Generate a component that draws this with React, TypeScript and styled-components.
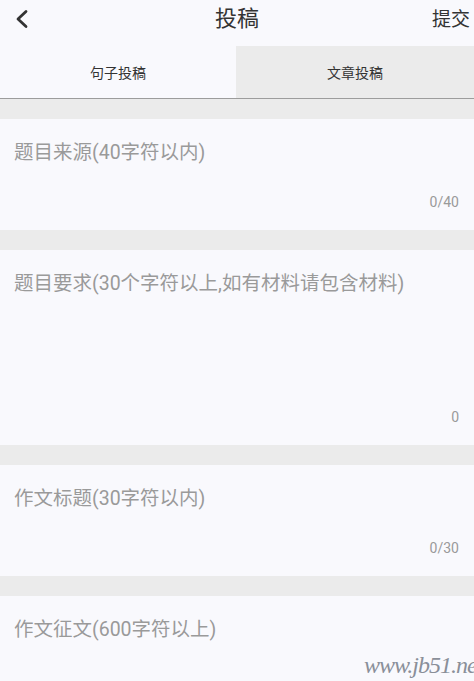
import React, { useState } from "react";
import styled, { createGlobalStyle } from "styled-components";

const GlobalStyle = createGlobalStyle`
  html, body {
    margin: 0;
    padding: 0;
    background: #f9f9fd;
  }
  body {
    font-family: "Roboto", "Noto Sans CJK SC", sans-serif;
  }
`;

const Page = styled.div`
  position: relative;
  width: 474px;
  height: 681px;
  overflow: hidden;
  background: #ebebeb;
  display: flex;
  flex-direction: column;
  & > * {
    flex-shrink: 0;
  }
`;

const Header = styled.div`
  height: 46px;
  display: grid;
  grid-template-columns: 60px 1fr 60px;
  align-items: center;
  background: #f9f9fd;
`;

const BackButton = styled.button`
  border: none;
  background: none;
  padding: 0 0 0 12px;
  height: 46px;
  display: flex;
  align-items: center;
  margin-top: -9px;
  cursor: pointer;
  svg {
    width: 20px;
    height: 20px;
  }
`;

const Title = styled.h1`
  margin: 0;
  margin-top: -15px;
  text-align: center;
  font-size: 22px;
  font-weight: 400;
  color: #333;
`;

const Submit = styled.button`
  border: none;
  background: none;
  padding: 0 4px 0 0;
  margin-top: -11px;
  font-family: inherit;
  font-size: 19px;
  color: #333;
  text-align: right;
  cursor: pointer;
  white-space: nowrap;
`;

const Tabs = styled.div`
  display: grid;
  grid-template-columns: 236px 1fr;
  height: 52px;
  border-bottom: 1px solid #9c9c9c;
`;

const Tab = styled.div<{ $active: boolean }>`
  display: flex;
  align-items: center;
  justify-content: center;
  font-size: 14px;
  color: #333;
  background: ${(p) => (p.$active ? "#f9f9fd" : "#ebebeb")};
  cursor: pointer;
`;

const Form = styled.div`
  display: flex;
  flex-direction: column;
  gap: 20px;
  padding-top: 20px;
`;

const Card = styled.div<{ $height: number }>`
  height: ${(p) => p.$height}px;
  background: #f9f9fd;
  display: flex;
  flex-direction: column;
  padding: 20px 15px 19px 14px;
  box-sizing: border-box;
  flex-shrink: 0;
`;

const Field = styled.textarea`
  flex: 1;
  border: none;
  background: transparent;
  resize: none;
  outline: none;
  padding: 0;
  font-family: inherit;
  font-size: 19.5px;
  line-height: 28px;
  color: #333;
  &::placeholder {
    color: #9a9a9a;
  }
`;

const Counter = styled.span`
  align-self: flex-end;
  font-size: 14px;
  color: #9a9a9a;
  line-height: 18px;
`;

const Watermark = styled.span`
  position: absolute;
  left: 364px;
  bottom: 2px;
  font-family: "Liberation Serif", serif;
  font-style: italic;
  font-size: 24px;
  color: #8a8f99;
  letter-spacing: -1px;
  white-space: nowrap;
`;

const fields = [
  { placeholder: "题目来源(40字符以内)", max: 40, height: 111, showMax: true },
  { placeholder: "题目要求(30个字符以上,如有材料请包含材料)", max: 0, height: 195, showMax: false },
  { placeholder: "作文标题(30字符以内)", max: 30, height: 111, showMax: true },
  { placeholder: "作文征文(600字符以上)", max: 0, height: 200, showMax: false },
];

const App = () => {
  const [tab, setTab] = useState(0);
  const [values, setValues] = useState<string[]>(fields.map(() => ""));

  const onChange = (i: number, v: string) => {
    setValues((prev) => prev.map((x, j) => (j === i ? v : x)));
  };

  return (
    <>
      <GlobalStyle />
      <Page>
        <Header>
          <BackButton aria-label="back">
            <svg viewBox="0 0 20 20" fill="none">
              <path
                d="M14 2.5 L6 10 L14 17.5"
                stroke="#333"
                strokeWidth="2.8"
                strokeLinecap="round"
                strokeLinejoin="round"
              />
            </svg>
          </BackButton>
          <Title>投稿</Title>
          <Submit>提交</Submit>
        </Header>
        <Tabs>
          <Tab $active={tab === 0} onClick={() => setTab(0)}>
            句子投稿
          </Tab>
          <Tab $active={tab === 1} onClick={() => setTab(1)}>
            文章投稿
          </Tab>
        </Tabs>
        <Form>
          {fields.map((f, i) => (
            <Card key={i} $height={f.height}>
              <Field
                placeholder={f.placeholder}
                value={values[i]}
                onChange={(e) => onChange(i, e.target.value)}
              />
              {i < 3 && (
                <Counter>
                  {f.showMax ? `${values[i].length}/${f.max}` : values[i].length}
                </Counter>
              )}
            </Card>
          ))}
        </Form>
        <Watermark>www.jb51.net</Watermark>
      </Page>
    </>
  );
};

export default App;
